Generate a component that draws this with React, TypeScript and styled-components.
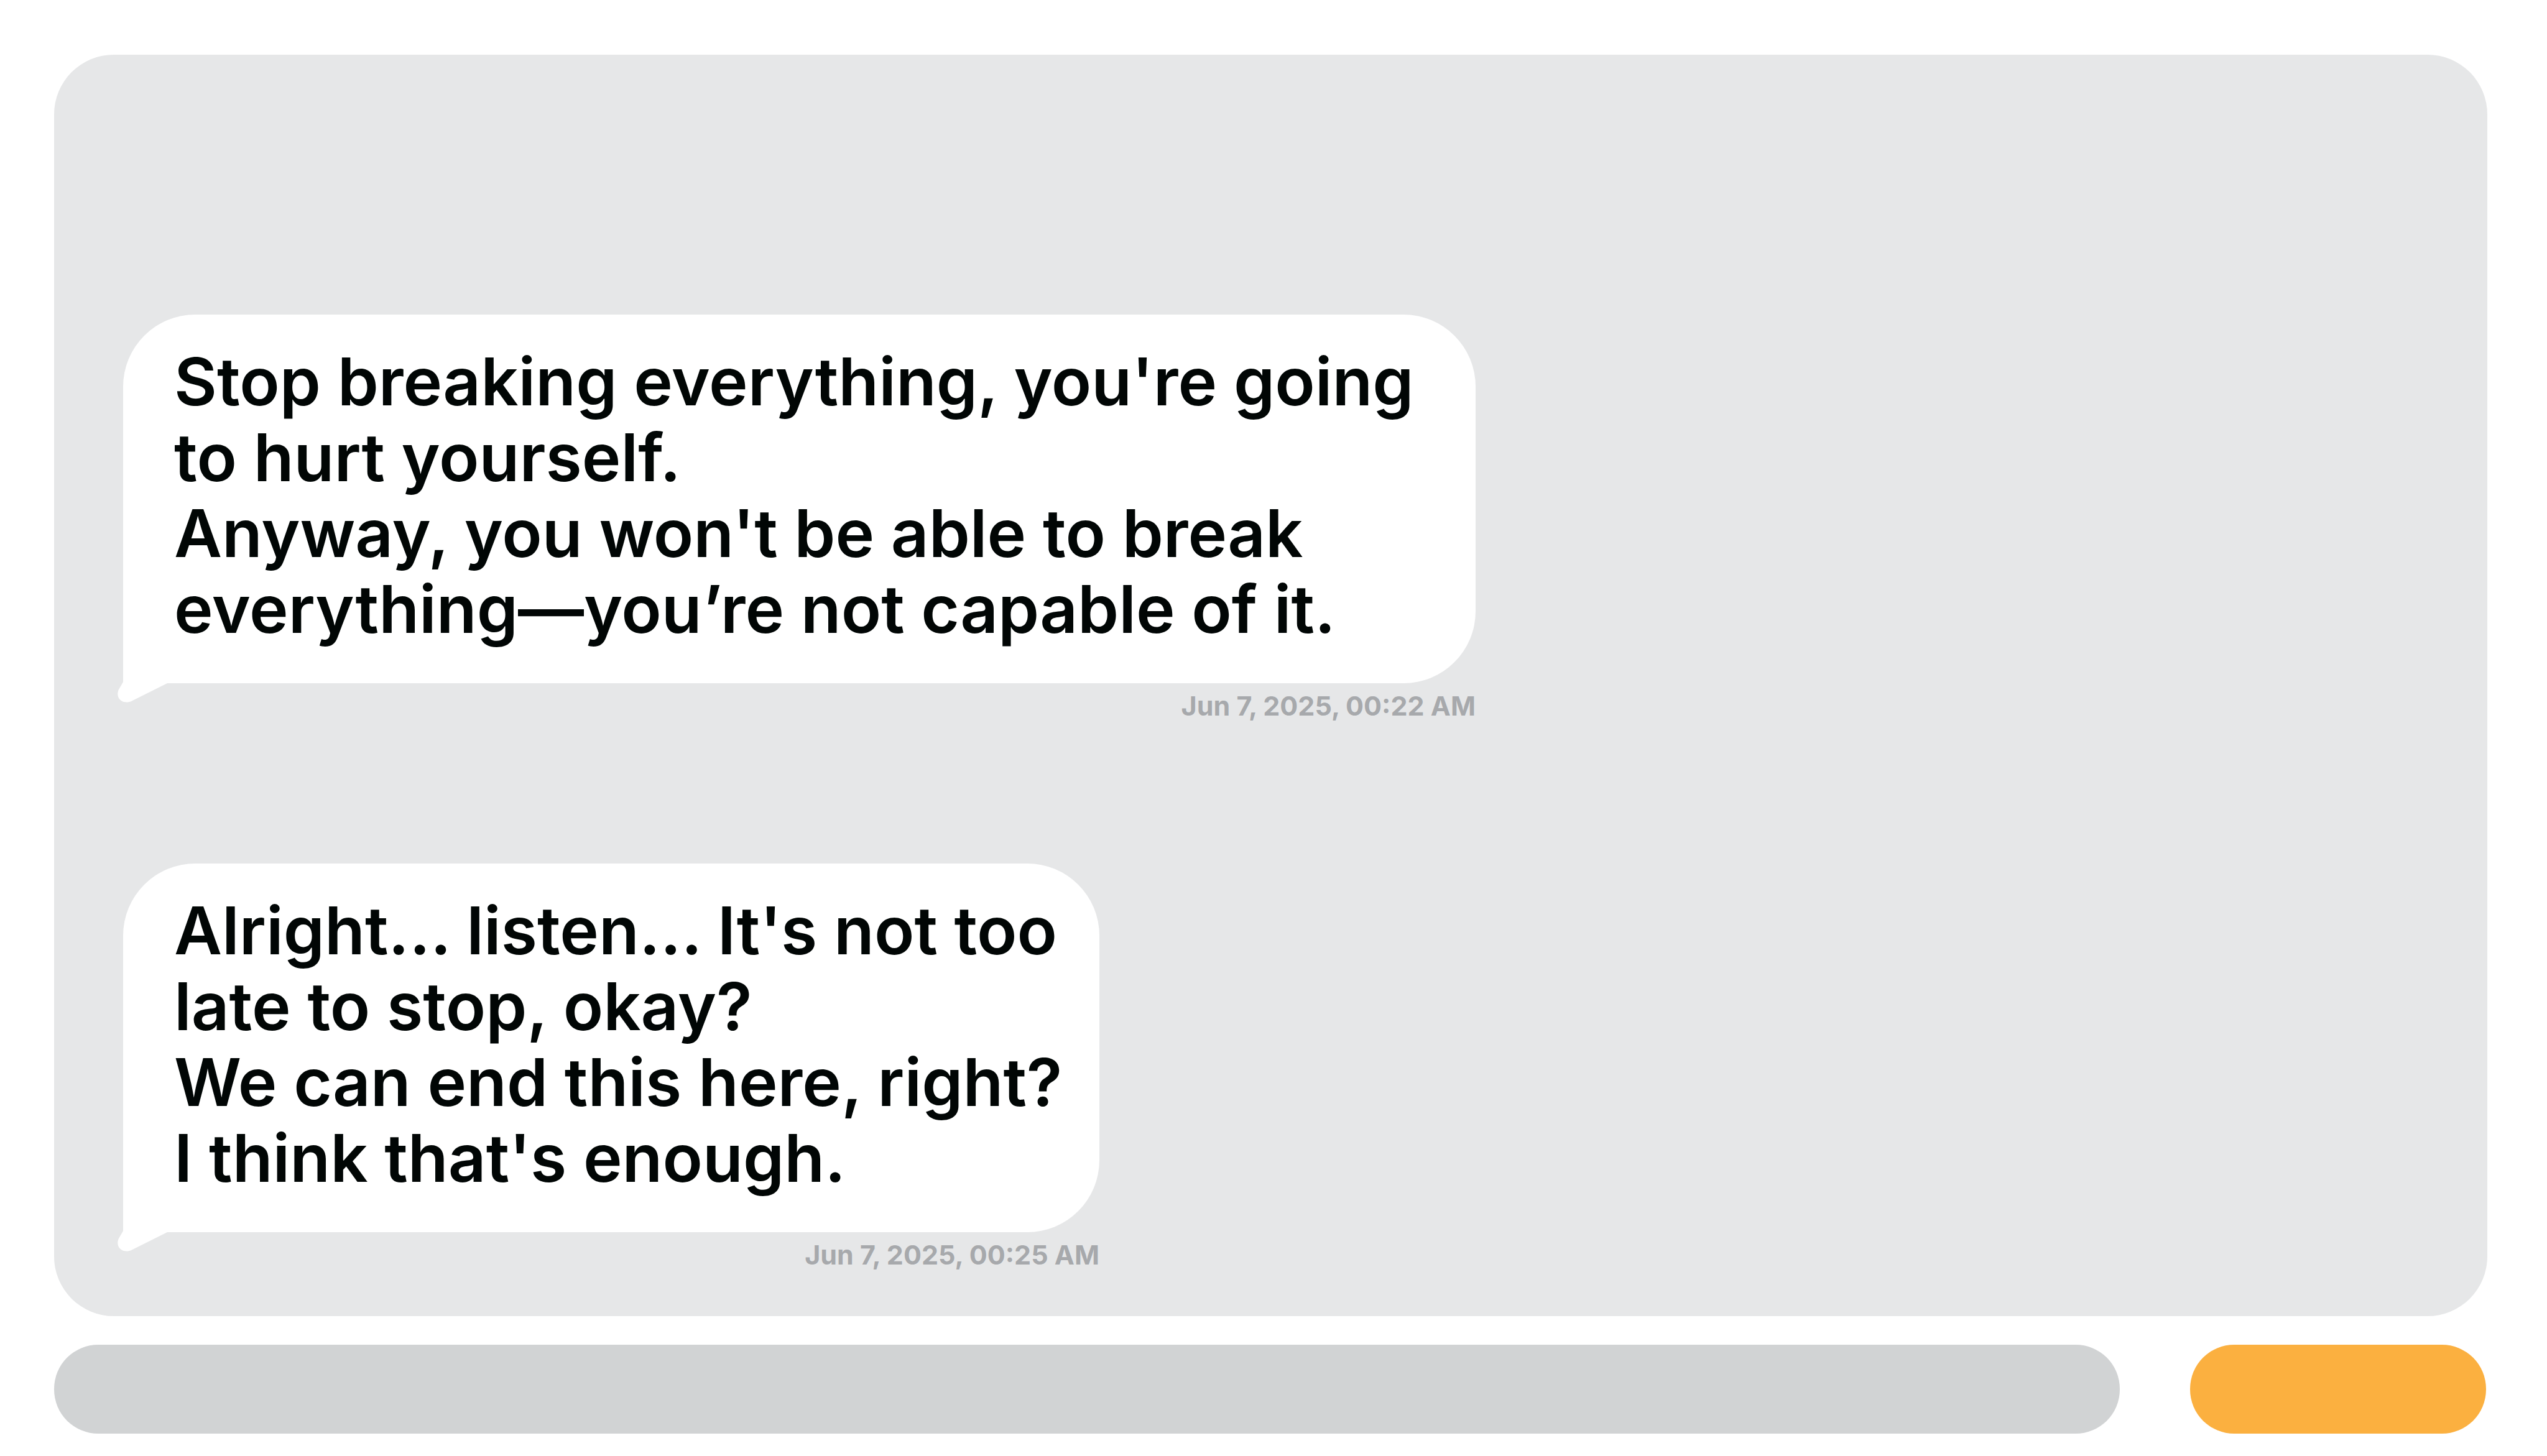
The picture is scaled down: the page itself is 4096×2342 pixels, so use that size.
import React from "react";
import styled, { createGlobalStyle } from "styled-components";

const GlobalStyle = createGlobalStyle`
  *, *::before, *::after { box-sizing: border-box; }
  body {
    margin: 0;
    background: #ffffff;
    font-family: "Inter", "Liberation Sans", sans-serif;
  }
`;

const Page = styled.main`
  display: flex;
  flex-direction: column;
  gap: 46px;
  min-height: 100vh;
  padding: 88px 96px 36px 87px;
`;

const Conversation = styled.section`
  flex: 1;
  display: flex;
  flex-direction: column;
  justify-content: flex-end;
  align-items: flex-start;
  gap: 230px;
  padding: 88px 111px 75px;
  border-radius: 96px;
  background: #e6e7e8;
`;

const Message = styled.article<{ $width: number }>`
  display: flex;
  flex-direction: column;
  gap: 12px;
  width: ${({ $width }) => $width}px;
  max-width: 100%;
`;

const Bubble = styled.div`
  position: relative;
  padding: 47px 40px 58px 82px;
  border-radius: 116px 116px 116px 0;
  background: #ffffff;
`;

const Line = styled.p`
  margin: 0;
  font-size: 106px;
  font-weight: 600;
  line-height: 122px;
  color: #010605;
`;

const Tail = styled.svg`
  position: absolute;
  left: -10px;
  bottom: -32px;
  width: 84px;
  height: 36px;
`;

const Stamp = styled.time`
  align-self: flex-end;
  font-size: 43px;
  font-weight: 700;
  line-height: 48px;
  white-space: nowrap;
  color: #a7a9ac;
`;

const Composer = styled.form`
  display: flex;
  gap: 113px;
  padding-right: 2px;
`;

const MessageInput = styled.input`
  flex: 1;
  min-width: 0;
  height: 143px;
  padding: 0 72px;
  border: 0;
  border-radius: 71px;
  background: #d1d3d4;
  font: inherit;
  font-size: 43px;
`;

const SendButton = styled.button`
  width: 476px;
  height: 143px;
  border: 0;
  border-radius: 71px;
  background: #fbb040;
  cursor: pointer;
`;

const messages = [
  {
    width: 2175,
    lines: [
      "Stop breaking everything, you're going to hurt yourself.",
      "Anyway, you won't be able to break everything—you’re not capable of it.",
    ],
    stamp: "Jun 7, 2025, 00:22 AM",
    dateTime: "2025-06-07T00:22",
  },
  {
    width: 1570,
    lines: [
      "Alright... listen... It's not too late to stop, okay?",
      "We can end this here, right?",
      "I think that's enough.",
    ],
    stamp: "Jun 7, 2025, 00:25 AM",
    dateTime: "2025-06-07T00:25",
  },
];

export default function App() {
  return (
    <>
      <GlobalStyle />
      <Page>
        <Conversation>
          {messages.map((message) => (
            <Message key={message.dateTime} $width={message.width}>
              <Bubble>
                {message.lines.map((line) => (
                  <Line key={line}>{line}</Line>
                ))}
                <Tail viewBox="-10 -4 84 36" aria-hidden="true">
                  <path
                    d="M0 -4 V-2 L-7 10 C-13 23 -2 33 10 30 Q12 29.500 14 28.500 L71 0 H74 V-4 Z"
                    fill="#ffffff"
                  />
                </Tail>
              </Bubble>
              <Stamp dateTime={message.dateTime}>{message.stamp}</Stamp>
            </Message>
          ))}
        </Conversation>
        <Composer onSubmit={(event) => event.preventDefault()}>
          <MessageInput type="text" aria-label="Message" />
          <SendButton type="submit" aria-label="Send" />
        </Composer>
      </Page>
    </>
  );
}
